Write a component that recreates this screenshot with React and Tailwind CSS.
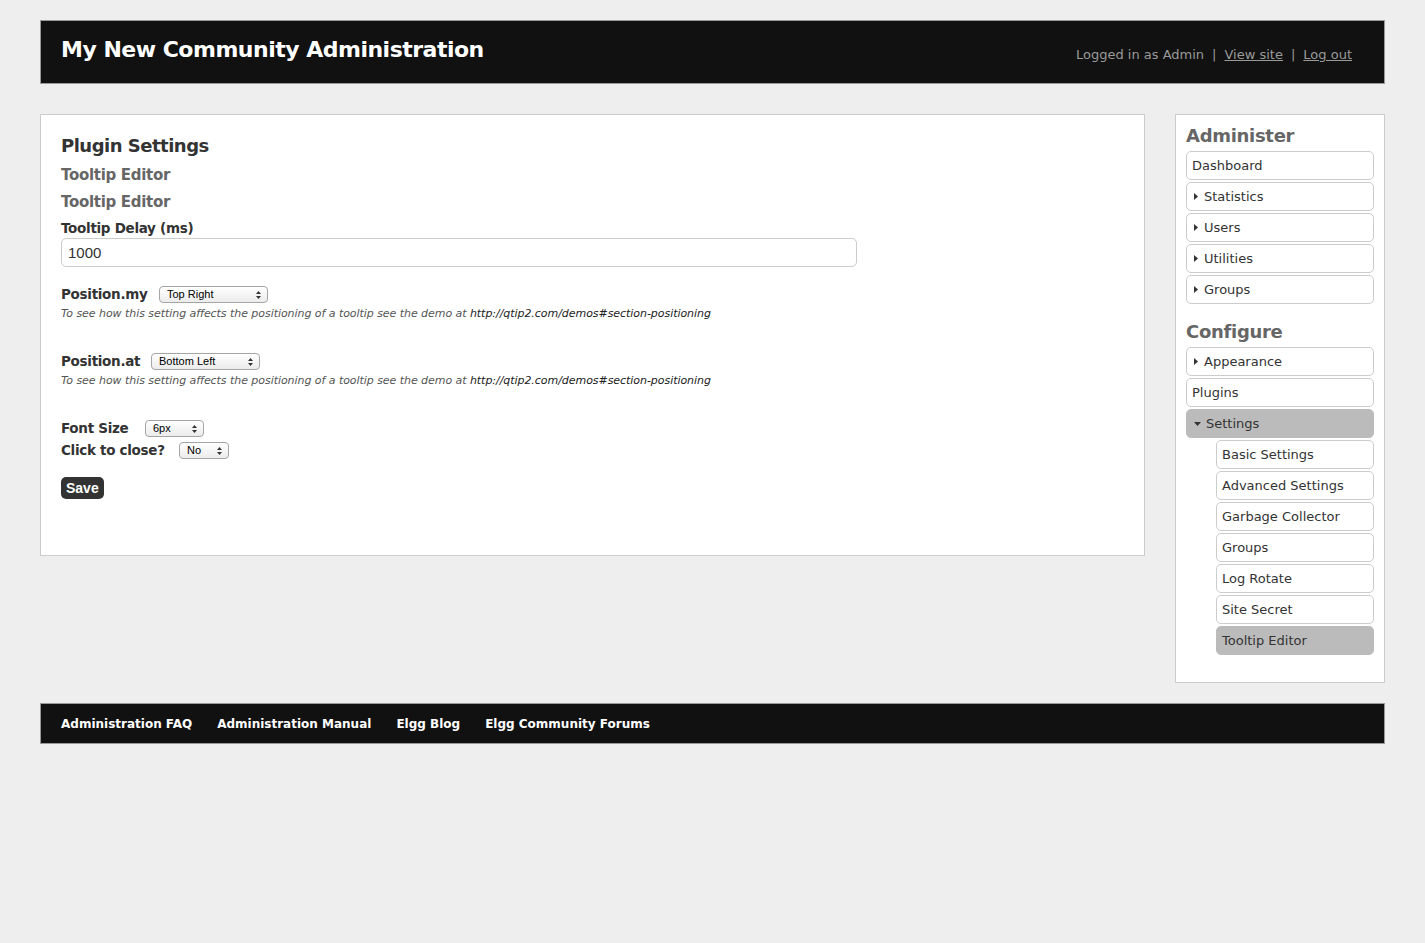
import React from "react";

const F = { fontFamily: '"DejaVu Sans", "Liberation Sans", sans-serif' };

function Sel({ w, text }) {
  return (
    <div
      className="inline-flex h-[17px] items-center justify-between rounded-[4px] border border-[#a5a5a5] bg-gradient-to-b from-white to-[#ececec] pl-[7px] pr-[6px] text-[11px] text-black"
      style={{ width: w, fontFamily: '"Liberation Sans", Arial, sans-serif' }}
    >
      <span>{text}</span>
      <svg width="5" height="8" viewBox="0 0 5 8">
        <path d="M0 3 L2.5 0 L5 3 Z" fill="#333" />
        <path d="M0 5 L2.5 8 L5 5 Z" fill="#333" />
      </svg>
    </div>
  );
}

function Help() {
  return (
    <div className="mt-[4px] text-[11px] italic leading-[13px] tracking-[-0.05px] text-[#555]" style={F}>
      To see how this setting affects the positioning of a tooltip see the demo at{" "}
      <span className="text-[#222]">http://qtip2.com/demos#section-positioning</span>
    </div>
  );
}

function Right() {
  return (
    <svg width="4" height="7" viewBox="0 0 4 7" className="mr-[6px]">
      <path d="M0 0 L4 3.5 L0 7 Z" fill="#333" />
    </svg>
  );
}
function Down() {
  return (
    <svg width="7" height="4" viewBox="0 0 7 4" className="mr-[5px]">
      <path d="M0 0 L7 0 L3.5 4 Z" fill="#333" />
    </svg>
  );
}

function Item({ children, arrow, down, sub, active }) {
  return (
    <div
      className={`flex h-[29px] items-center rounded-[5px] border text-[13px] text-[#333] ${
        sub ? "ml-[30px]" : ""
      } ${active ? "border-[#bbb] bg-[#bbb]" : "border-[#ccc] bg-white"} ${
        arrow || down ? "pl-[7px]" : "pl-[5px]"
      }`}
    >
      {arrow && <Right />}
      {down && <Down />}
      <span>{children}</span>
    </div>
  );
}

function Row({ label, lw, children, className }) {
  return (
    <div className={`flex h-[17px] items-center ${className}`}>
      <span
        className="shrink-0 text-[13.5px] font-bold tracking-[-0.3px] text-[#333]"
        style={{ width: lw }}
      >
        {label}
      </span>
      {children}
    </div>
  );
}

export default function App() {
  return (
    <div className="min-h-screen bg-[#eeeeee] px-10 pt-5 pb-[200px]" style={F}>
      <div className="flex h-[64px] items-start justify-between border border-[#999] bg-[#111] pl-5 pr-[32px]">
        <h1 className="mt-[12px] text-[22px] font-bold tracking-[-0.5px] text-white">
          My New Community Administration
        </h1>
        <div className="mt-[24px] text-[13px] text-[#999]">
          Logged in as Admin<span className="mx-[8px]">|</span>
          <span className="underline">View site</span>
          <span className="mx-[8px]">|</span>
          <span className="underline">Log out</span>
        </div>
      </div>

      <div className="mt-[30px] flex items-start gap-[30px]">
        <div className="flex-1 border border-[#ccc] bg-white px-5 pt-[18px] pb-[56px]">
          <h2 className="text-[18px] font-bold leading-[26px] tracking-[-0.5px] text-[#333]">Plugin Settings</h2>
          <h3 className="mt-[3px] text-[15px] font-bold leading-[26px] tracking-[-0.3px] text-[#666]">
            Tooltip Editor
          </h3>
          <h3 className="mt-[1px] text-[15px] font-bold leading-[26px] tracking-[-0.3px] text-[#666]">
            Tooltip Editor
          </h3>
          <div className="mt-[3px] text-[13.5px] font-bold leading-[20px] tracking-[-0.3px] text-[#333]">
            Tooltip Delay (ms)
          </div>
          <div
            className="h-[29px] w-[796px] rounded-[5px] border border-[#ccc] px-[6px] leading-[27px] text-[#333]"
            style={{ fontFamily: '"Liberation Sans", Arial, sans-serif', fontSize: 15 }}
          >
            1000
          </div>

          <Row label="Position.my" lw={98} className="mt-[19px]">
            <Sel w={109} text="Top Right" />
          </Row>
          <Help />

          <Row label="Position.at" lw={90} className="mt-[33px]">
            <Sel w={109} text="Bottom Left" />
          </Row>
          <Help />

          <Row label="Font Size" lw={84} className="mt-[33px]">
            <Sel w={59} text="6px" />
          </Row>
          <Row label="Click to close?" lw={118} className="mt-[5px]">
            <Sel w={50} text="No" />
          </Row>

          <button
            className="mt-[18px] block h-[22px] rounded-[5px] bg-[#333] px-[5px] text-[14px] font-bold text-white"
            style={{ fontFamily: '"Liberation Sans", Arial, sans-serif' }}
          >
            Save
          </button>
        </div>

        <div className="w-[210px] shrink-0 border border-[#ccc] bg-white px-[10px] pt-[7px] pb-[27px]">
          <h2 className="text-[18px] font-bold leading-[28px] tracking-[-0.3px] text-[#666]">Administer</h2>
          <div className="mt-[1px] flex flex-col gap-[2px]">
            <Item>Dashboard</Item>
            <Item arrow>Statistics</Item>
            <Item arrow>Users</Item>
            <Item arrow>Utilities</Item>
            <Item arrow>Groups</Item>
          </div>
          <h2 className="mt-[14px] text-[18px] font-bold leading-[28px] tracking-[-0.3px] text-[#666]">Configure</h2>
          <div className="mt-[1px] flex flex-col gap-[2px]">
            <Item arrow>Appearance</Item>
            <Item>Plugins</Item>
            <Item down active>Settings</Item>
            <Item sub>Basic Settings</Item>
            <Item sub>Advanced Settings</Item>
            <Item sub>Garbage Collector</Item>
            <Item sub>Groups</Item>
            <Item sub>Log Rotate</Item>
            <Item sub>Site Secret</Item>
            <Item sub active>Tooltip Editor</Item>
          </div>
        </div>
      </div>

      <div className="mt-5 flex h-[41px] items-center gap-[25px] border border-[#999] bg-[#111] px-5 text-[12px] font-bold text-white">
        <span>Administration FAQ</span>
        <span>Administration Manual</span>
        <span>Elgg Blog</span>
        <span>Elgg Community Forums</span>
      </div>
    </div>
  );
}
